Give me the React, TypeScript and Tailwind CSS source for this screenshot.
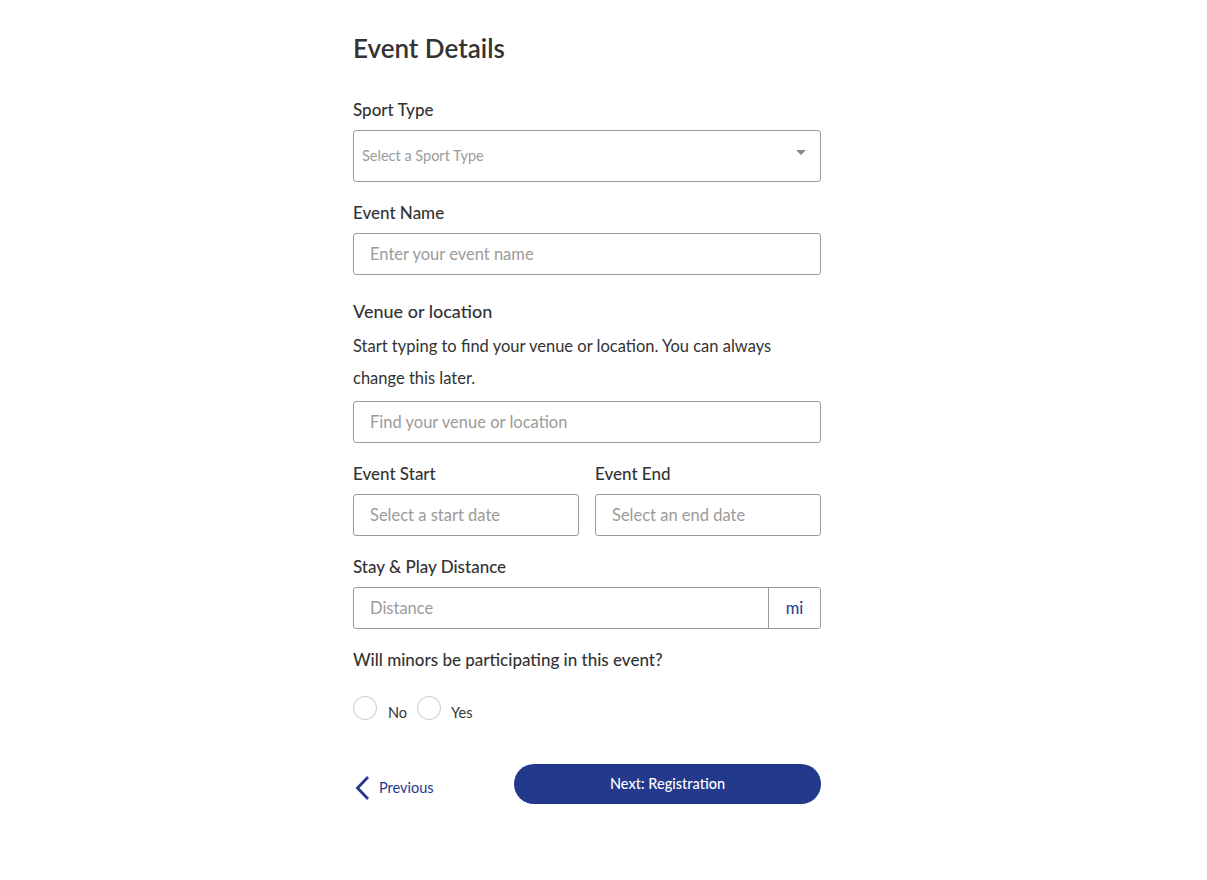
function Label({ children, className = '' }: { children: React.ReactNode; className?: string }) {
  return <div className={`h-5 text-[17px] font-medium leading-5 text-[#333] ${className}`}>{children}</div>;
}

function TextInput({ placeholder, className = '' }: { placeholder: string; className?: string }) {
  return (
    <input
      placeholder={placeholder}
      className={`h-[42px] w-full rounded-[3px] border border-[#9a9a9a] px-4 text-[16.5px] text-[#333] outline-none placeholder:text-[#9b9b9b] ${className}`}
    />
  );
}

export default function App() {
  return (
    <div className="min-h-[880px] bg-white font-['Lato','Noto_Sans',sans-serif] text-[#333]">
      <div className="ml-[353px] w-[468px] pt-8">
        <h1 className="h-8 text-[26px] font-semibold leading-8 text-[#333]">Event Details</h1>

        <Label className="mt-[36px]">Sport Type</Label>
        <div className="mt-[10px] flex h-[52px] items-center justify-between rounded-[3px] border border-[#9a9a9a] pl-2 pr-[14px]">
          <span className="text-[14.5px] text-[#9b9b9b]">Select a Sport Type</span>
          <span className="mb-2 h-0 w-0 border-x-[5px] border-t-[5px] border-x-transparent border-t-[#8a8a8a]" />
        </div>

        <Label className="mt-[21px]">Event Name</Label>
        <TextInput placeholder="Enter your event name" className="mt-[10px]" />

        <div className="mt-6 h-6 text-[18px] font-medium leading-6 text-[#333]">Venue or location</div>
        <p className="mt-[7px] text-[16.5px] leading-8 text-[#333]">
          Start typing to find your venue or location. You can always change this later.
        </p>
        <TextInput placeholder="Find your venue or location" className="mt-[7px]" />

        <div className="mt-[21px] grid grid-cols-2 gap-4">
          <div>
            <Label>Event Start</Label>
            <TextInput placeholder="Select a start date" className="mt-[10px]" />
          </div>
          <div>
            <Label>Event End</Label>
            <TextInput placeholder="Select an end date" className="mt-[10px]" />
          </div>
        </div>

        <Label className="mt-[21px]">Stay &amp; Play Distance</Label>
        <div className="mt-[10px] flex h-[42px] rounded-[3px] border border-[#9a9a9a]">
          <input
            placeholder="Distance"
            className="min-w-0 flex-1 px-4 text-[16.5px] outline-none placeholder:text-[#9b9b9b]"
          />
          <div className="flex w-[52px] items-center justify-center border-l border-[#9a9a9a] text-[16.5px] text-[#22398c]">
            mi
          </div>
        </div>

        <Label className="mt-[21px]">Will minors be participating in this event?</Label>
        <div className="mt-[26px] flex h-6 items-center">
          <span className="h-6 w-6 rounded-full border border-[#c9c9c9]" />
          <span className="ml-[11px] mt-[10px] text-[14.5px] leading-5 text-[#333]">No</span>
          <span className="ml-[10px] h-6 w-6 rounded-full border border-[#c9c9c9]" />
          <span className="ml-[10px] mt-[10px] text-[14.5px] leading-5 text-[#333]">Yes</span>
        </div>

        {/* footer buttons */}
        <div className="mt-[44px] flex items-center justify-between">
          <button className="mt-[8px] flex items-center text-[14.5px] text-[#22398c]">
            <svg width="16" height="24" viewBox="0 0 16 24" className="ml-[1px]">
              <polyline points="14,1 3.5,12 14,23" fill="none" stroke="#22398c" strokeWidth="2.8" />
            </svg>
            <span className="ml-[9px]">Previous</span>
          </button>
          <button className="h-10 w-[307px] rounded-full bg-[#22398c] text-[14.5px] font-medium text-white">
            Next: Registration
          </button>
        </div>
      </div>
    </div>
  );
}
